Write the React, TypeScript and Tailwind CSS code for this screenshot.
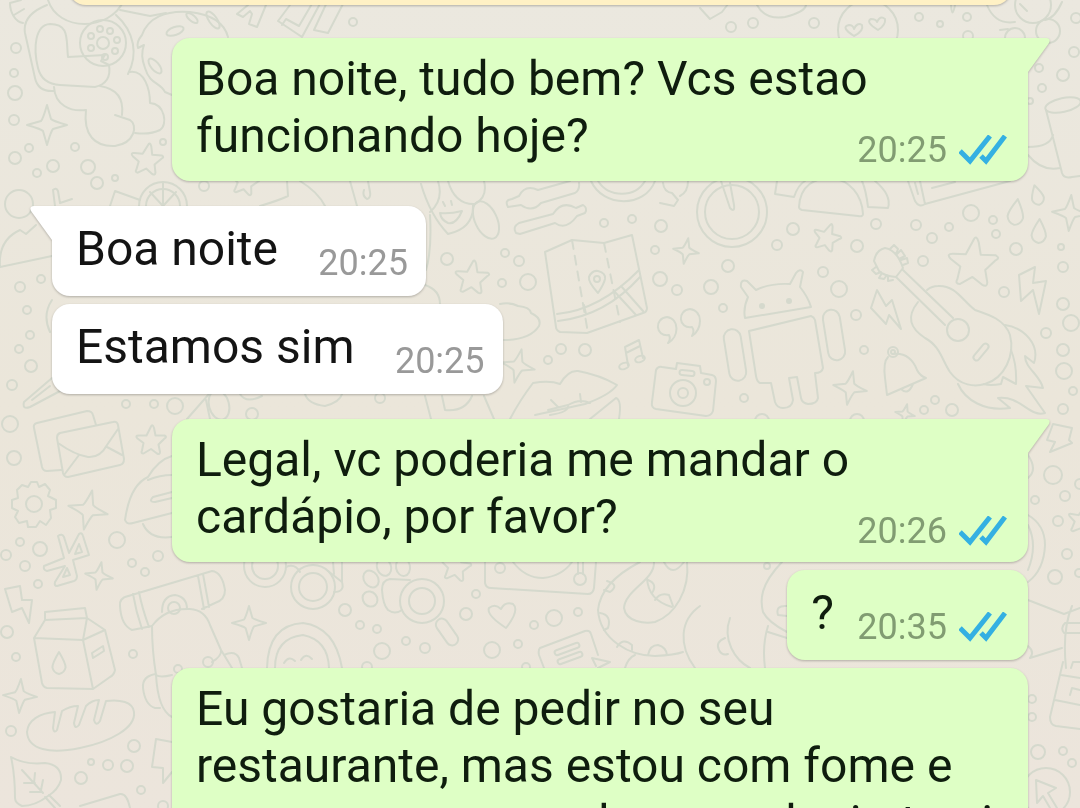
type Side = 'in' | 'out';

interface Message {
  text: string;
  time: string;
  side: Side;
  first?: boolean;
  multiline?: boolean;
}

const MESSAGES: Message[] = [
  { text: 'Boa noite, tudo bem? Vcs estao funcionando hoje?', time: '20:25', side: 'out', first: true, multiline: true },
  { text: 'Boa noite', time: '20:25', side: 'in', first: true },
  { text: 'Estamos sim', time: '20:25', side: 'in' },
  { text: 'Legal, vc poderia me mandar o cardápio, por favor?', time: '20:26', side: 'out', first: true, multiline: true },
  { text: '?', time: '20:35', side: 'out' },
  {
    text: 'Eu gostaria de pedir no seu restaurante, mas estou com fome e como quero agora ler o cardapio to ai esperando',
    time: '20:36',
    side: 'out',
    multiline: true,
  },
];

// [cx, cy, r]
const CIRCLES = [
  [16, 48, 5], [14, 73, 4], [15, 93, 7], [14, 120, 5], [29, 148, 4], [15, 158, 6], [53, 166, 6], [37, 173, 4],
  [75, 147, 4], [88, 167, 7], [97, 183, 6], [115, 178, 3], [163, 142, 3], [19, 204, 14], [204, 186, 5],
  [103, 43, 23], [103, 43, 6], [91, 36, 3], [100, 29, 3], [110, 31, 3], [117, 40, 3], [115, 51, 3], [105, 57, 3], [91, 48, 3],
  [353, 22, 4], [731, 27, 5], [753, 23, 5], [814, 23, 5], [919, 17, 4], [940, 24, 3], [967, 17, 4], [968, 36, 5],
  [1076, 18, 5], [1074, 52, 5], [1063, 75, 6], [1039, 68, 4], [1042, 88, 4], [1030, 101, 3], [868, 30, 30],
  [1033, 5, 18], [1015, 38, 10], [1048, 31, 12], [163, 206, 24], [163, 206, 17],
  [732, 212, 35], [732, 212, 27], [971, 213, 8], [993, 220, 4], [996, 234, 4], [1016, 249, 6], [1061, 247, 3],
  [1063, 267, 5], [876, 224, 5], [916, 225, 5], [949, 227, 4], [932, 238, 5], [923, 261, 5], [857, 246, 6],
  [793, 229, 6], [777, 245, 5], [823, 272, 5], [839, 289, 8], [1004, 292, 5], [1063, 304, 6], [1071, 323, 8],
  [1046, 333, 5], [1063, 350, 6], [1064, 371, 8], [1073, 391, 4], [856, 315, 5], [864, 350, 4], [744, 398, 4],
  [935, 400, 4], [924, 410, 4], [952, 410, 6], [762, 421, 7], [857, 421, 7], [893, 352, 5], [893, 352, 2], [958, 330, 11],
  [447, 259, 6], [505, 253, 4], [519, 261, 5], [502, 283, 4], [528, 282, 8], [604, 223, 4], [632, 219, 4],
  [661, 226, 6], [655, 250, 4], [660, 279, 7], [677, 290, 5], [728, 266, 6], [711, 287, 7], [723, 308, 4],
  [561, 349, 5], [585, 350, 6], [548, 360, 4], [597, 279, 3], [683, 393, 13], [683, 393, 5], [707, 382, 3],
  [20, 287, 5], [41, 279, 4], [27, 310, 4], [30, 335, 4], [19, 349, 4], [31, 366, 6], [12, 385, 5],
  [126, 404, 4], [154, 404, 4], [175, 406, 8], [252, 414, 6], [380, 398, 5], [10, 424, 8], [14, 458, 7],
  [117, 540, 8], [40, 549, 7], [20, 542, 4], [6, 555, 5], [25, 566, 5], [38, 584, 4], [158, 556, 5], [132, 563, 4],
  [145, 572, 4], [34, 504, 8], [174, 608, 6], [208, 662, 5], [178, 669, 4], [7, 632, 6], [16, 657, 4], [133, 654, 4],
  [11, 731, 5], [134, 746, 6], [91, 762, 3], [108, 765, 5], [127, 766, 6], [81, 778, 6], [141, 790, 4], [163, 806, 5],
  [265, 566, 21], [265, 566, 13], [313, 587, 22], [313, 587, 14], [345, 610, 6], [360, 625, 4], [377, 629, 4],
  [382, 651, 8], [406, 641, 4], [425, 648, 5], [367, 667, 5], [476, 594, 4], [466, 614, 6], [422, 601, 22],
  [422, 601, 13], [500, 568, 5], [580, 579, 6], [554, 618, 8], [534, 625, 4], [578, 612, 4], [518, 644, 4],
  [492, 650, 8], [526, 667, 4], [767, 566, 3], [1053, 475, 9], [1065, 496, 5], [1035, 500, 4], [1058, 521, 5],
  [1067, 554, 5], [1055, 577, 7], [1079, 573, 4], [1080, 484, 5], [1063, 409, 5], [1032, 699, 4], [1032, 717, 4],
  [1038, 752, 7], [1063, 751, 4], [1072, 763, 4], [1046, 792, 24],
];

// [cx, cy, size, rotation]
const STARS = [
  [147, 159, 16, 5], [827, 237, 14, 15], [973, 262, 25, 2], [472, 277, 17, 3], [151, 440, 15, 0], [456, 566, 15, 8], [1082, 520, 14, 10],
  [245, 181, 14, 10],
];

const SPARKLES = [
  [47, 125, 20, 0], [1070, 213, 18, 4], [850, 388, 17, 10], [686, 251, 13, 10], [518, 366, 17, 12],
  [88, 510, 20, 12], [99, 576, 14, 10], [249, 623, 17, 0], [20, 696, 17, 3], [905, 414, 10, 12],
];

const DROPS = [
  [1016, 212, 13, 8], [1037, 195, 10, -15], [1039, 231, 12, 3], [59, 663, 11, 0],
];

// [cx, cy, rx, ry, rotation]
const ELLIPSES = [
  [175, 31, 9, 4, -20], [192, 18, 7, 3, 40], [155, 66, 9, 4, 50], [213, 20, 10, 4, 55], [1063, 105, 18, 7, -12],
  [486, 220, 11, 20, -25], [219, 405, 10, 15, -15], [371, 579, 7, 9, -35], [370, 599, 7, 8, -40],
  [384, 567, 7, 9, -20], [403, 567, 7, 9, -10], [624, 366, 5, 3, -20], [640, 359, 5, 3, -20],
];

// [cx, cy, width, height, rotation]
const PILLS = [
  [834, 335, 17, 51, -9], [735, 355, 17, 52, -9], [981, 352, 6, 20, 40], [447, 632, 12, 30, -35],
  [687, 373, 15, 5, 6], [567, 649, 26, 5, -20], [570, 658, 26, 5, -20],
];

const PATHS = [
  // astronaut bear
  'M48 0C58 32 110 32 124 0M47 5Q22 15 25 33L35 78Q38 92 54 91M10 3C10 12 15 22 23 23M10 3L21 0M14 15L24 9',
  'M68 57C66 40 70 24 50 24C35 25 33 48 38 68Q42 84 60 85L95 87Q112 83 109 65L101 61L105 55L68 57',
  'M116 15C135 32 138 55 128 74M54 87C55 105 70 112 86 110M86 110C83 135 95 147 115 146C135 143 138 125 130 120L115 115M100 86Q125 90 122 115',
  'M130 72C145 70 150 90 150 103C165 104 168 125 160 130Q150 135 135 133M120 10L150 16L166 13',
  'M142 35C148 18 165 10 190 12C215 15 225 25 228 37M142 35Q136 42 138 48L144 45Q140 55 145 68C150 85 160 82 165 92L172 95',
  // top row
  'M248 5L237 14L243 17L250 11L252 14L249 24L257 27L268 0M290 5L278 21L302 37L322 0M282 25L286 19L299 26L313 2M328 0L314 30L328 33L345 0',
  'M700 8L710 19L722 12L728 4M757 5Q765 20 785 17Q805 12 806 5M951 5Q952 20 955 5M987 5Q995 25 1015 22M1000 30L1008 29M1062 2Q1055 18 1045 20M1020 4L1027 11',
  'M854 36Q840 27 849 25Q853 25 854 29Q857 22 862 25Q864 31 854 36ZM878 30Q865 22 871 19Q876 19 877 22Q880 15 885 19Q886 25 878 30Z',
  'M1046 110L1062 173Q1064 179 1072 177L1080 176M1028 147Q1050 147 1053 135M1028 155Q1042 172 1060 168',
  // between the first bubbles
  'M53 190Q56 187 58 191L60 203L72 199M53 190L55 206M110 206L115 191L140 200M163 182V206M150 192L163 206L176 192M287 181L288 196Q280 200 260 206M300 181Q318 192 325 206M350 181L357 206M364 190Q362 196 367 199Q371 198 370 192L368 181',
  'M421 184Q430 215 448 234Q474 228 473 205M440 213Q450 214 462 211Q456 225 448 223Q441 220 440 213M443 202L445 206M451 201L452 205M448 181Q455 205 475 204Q488 197 484 181M438 181Q444 200 430 212M430 215Q432 250 426 270M425 285Q440 290 440 304',
  'M508 207Q504 200 512 199L519 196Q525 184 538 190L570 181M508 207L521 205Q532 213 541 203L575 193Q580 190 579 183',
  'M516 233Q512 227 519 223L553 214Q562 200 576 208L583 205Q588 208 585 213L577 216Q566 231 555 223L520 234Z',
  'M591 181C603 208 645 208 655 181M598 181C609 198 635 198 645 181M663 183Q664 192 672 193L678 200L674 206L660 203M680 196Q688 192 688 181',
  'M721 181L730 208Q735 213 734 205L730 183',
  'M799 207C800 185 815 178 831 178C850 180 862 195 863 214Q863 217 858 216L802 210Q799 209 799 207M777 181L775 194L794 197Q798 185 805 181M862 181Q866 190 868 207L888 208Q892 195 875 181',
  'M908 181L915 201Q919 208 925 204L1010 181M925 204L920 181M932 188L955 182M915 183L918 194',
  // map
  'M545 252L572 240L604 243L632 235L647 308Q647 312 643 313L587 333L560 332Q556 330 556 327ZM557 314Q600 310 639 270M558 321Q605 316 640 277M614 291L636 315M621 286L643 311M584 305L586 314',
  'M598 293Q588 282 589 277Q592 270 598 271Q606 273 605 279Q604 284 598 293Z',
  'M669 335C655 337 654 318 667 317C680 319 679 337 668 343Q671 339 669 335ZM692 327C678 329 677 310 690 309C704 311 702 330 692 336Q695 331 692 327ZM628 365L625 347L639 340L643 358M626 353L640 346',
  'M656 370Q658 366 662 367L676 369L677 363L700 366L701 373L712 375Q716 376 716 381L713 411Q711 416 706 416L656 409Q651 408 652 402Z',
  'M510 419Q520 400 533 383Q550 380 560 384Q568 370 578 371Q600 375 617 385Q610 395 585 404L535 415M548 410L568 405Q570 412 550 415M551 400L558 407M580 394L581 402M568 405Q580 398 590 403M590 419L616 398Q622 400 619 419',
  'M500 304Q510 302 518 306Q530 307 531 313Q542 318 539 326Q530 340 504 340M425 396L431 419M484 396L494 419M442 396L445 410Q465 412 472 396',
  // robot
  'M745 318Q743 308 748 297L741 287Q740 279 747 281L756 290Q770 283 790 284L796 273Q800 268 803 272L800 287Q808 297 811 307Z',
  'M749 331L811 316Q814 317 815 320L823 368Q822 373 815 373L818 398Q817 404 808 404Q802 403 801 398L797 377L789 378L793 400Q792 408 783 408Q777 408 775 402L771 383L760 383Q757 382 756 376Z',
  'M1019 275L1035 267L1033 283L1046 281L1039 314L1033 290L1021 301ZM877 290L871 308L886 324L889 315L901 329L892 300L886 306Z',
  'M888 357Q883 362 885 378L887 395L926 378Q920 376 917 370Q910 352 893 354M901 389Q908 396 913 384',
  // guitar
  'M874 261Q876 250 885 248Q897 250 903 268L896 277Q884 276 879 271ZM903 270L953 318M896 277L945 325M890 249L894 245L898 249L896 254M897 254L901 250L905 256L899 259M901 260L907 258L908 263L903 265M876 267L872 270L876 274L881 272M882 273L879 278L884 279L887 275M888 276L888 281L893 280',
  'M918 302C906 317 910 328 925 338C940 346 942 360 950 372C960 386 975 387 985 384C1005 378 1015 355 1010 335C1005 320 990 315 975 310C962 300 955 285 938 286Q932 286 927 290',
  'M1005 325C1025 328 1040 345 1034 363L1025 356C1025 368 1040 375 1043 388L1026 386L1045 413C1030 418 1020 395 998 398L1010 408C985 412 965 400 958 384M1011 350Q1017 365 1016 384L1003 377L1001 384Q990 386 984 384',
  // left column
  'M0 267Q-2 240 20 230L26 234L36 225M0 267L52 256M52 300Q42 315 50 332M24 402Q22 410 30 407L62 390M24 402L52 378M32 400L50 386',
  'M305 394Q308 404 325 406Q340 402 342 394M187 419L209 394M206 400L210 419M240 394Q246 404 262 396',
  'M61 470L47 471Q43 471 42 467L34 428Q33 424 37 423L87 411Q92 411 93 415L96 425M60 433L113 422Q117 421 118 425L124 459Q124 464 120 465L68 477Q64 477 63 473L57 438Q57 434 60 433M58 443Q75 455 88 457Q100 458 107 445L118 429M64 475L79 455M122 455L107 447',
  'M31 482H37L39 487L45 484L50 490L48 496L56 500V508L50 510L51 518L46 525L40 521L36 527H28L27 521L19 523L15 517L18 511L12 508V500L18 498L17 490L22 485L28 487Z',
  'M58 536Q62 533 64 537L69 553L79 534Q82 532 83 536L89 555L73 560L77 576Q77 580 74 581L57 586Q54 586 55 582L65 566L47 571Q43 570 44 566L64 558ZM75 554L79 544L82 552ZM63 577L67 568L70 575Z',
  'M172 456Q158 460 148 477Q130 485 125 520Q127 525 133 523L172 513M148 480Q160 475 172 475M172 492L153 497Q148 502 155 502L172 498M143 524Q150 540 172 537M5 589L20 586L22 600L32 600L29 623L22 608L12 612Z',
  'M128 596Q119 598 120 606Q121 625 132 630L152 626M125 597L212 571Q222 572 225 590Q225 600 215 603L202 609M133 594Q136 612 142 629M139 592Q142 608 149 627M198 576L204 609M203 574L209 607M162 612Q162 596 175 595Q187 597 187 609',
  'M152 626Q165 608 190 609Q205 610 210 625L221 650Q222 656 212 662M152 626Q152 650 156 675Q160 678 172 675M156 674Q142 676 143 688Q145 705 155 708H160M156 675Q158 710 172 717M224 655Q235 650 239 658L242 668M221 650L232 668',
  'M34 638L45 620V612L85 608L87 618L105 630L115 670Q114 675 110 677L93 689L47 688Q43 687 42 683ZM34 638L83 640L93 689M83 640L105 630M83 640L87 618L45 620M92 653L103 646L104 651L93 658Z',
  'M27 732C28 720 40 713 55 712L53 728Q54 734 57 730L62 711Q70 706 78 706L74 723Q75 730 79 725L86 706Q92 700 99 700L94 720Q96 727 100 721L106 701C120 699 133 702 134 712C136 728 110 742 80 748C50 754 28 750 27 732Z',
  'M11 757Q25 765 45 763Q62 765 61 780Q58 790 48 796Q35 806 22 806Q15 803 15 798Q15 775 11 757M22 770L43 793M35 773L34 783M24 783H35M43 780L41 790M30 792H41M45 797L55 808M49 795L60 806M172 742L156 739L152 767L163 768V783L172 772M80 806L120 794Q127 793 130 808',
  // middle strip
  'M286 567Q295 563 300 572M328 571L342 582V562M334 592Q345 592 342 582M333 562L334 574M410 580L390 579Q382 580 382 590Q383 605 388 610Q395 615 402 610',
  'M267 668Q268 625 303 623Q335 627 342 668M275 668Q275 638 303 635Q328 640 329 668M284 663Q289 655 295 661M301 660Q306 652 312 659',
  'M485 562V583Q486 588 491 588L588 594Q593 594 594 588L596 562M513 562Q525 578 543 578Q562 576 572 562M578 574V562M583 574V562',
  'M506 628Q486 615 489 608Q495 603 501 609Q505 601 513 604Q520 610 506 628ZM540 648L585 631Q590 630 591 634L598 655M540 648Q538 650 539 655L544 668M598 668L610 662L592 658L596 666',
  'M640 562C615 575 600 590 598 610C600 640 630 656 655 656Q675 655 683 652M654 562C655 580 625 590 624 608C626 622 645 624 655 622C675 615 690 590 687 562M647 578Q648 600 672 607M700 606C680 620 678 645 695 668M730 618C722 640 735 660 750 668',
  'M664 562Q672 578 684 562M607 581Q620 585 610 592L604 590M600 613Q612 615 608 628L604 630M617 647Q623 637 632 645L632 650M648 655Q650 645 658 645Q666 647 667 655M655 600Q660 592 669 595L673 606M648 580Q658 584 652 593M725 638Q715 642 719 650Q722 656 728 654M625 668Q628 658 635 655',
  'M782 562C760 585 760 600 763 612Q768 622 787 632M768 626Q762 645 765 668M768 632L787 638M787 606Q775 605 778 615L787 616',
  // right column
  'M1053 424L1072 428L1069 440L1072 443L1050 452L1055 442L1047 440ZM1028 455Q1038 470 1028 478M1028 515Q1045 525 1045 545Q1044 570 1028 582M1028 525Q1038 545 1028 570M1028 600L1064 614L1080 608M1028 646Q1035 652 1030 658L1062 648M1072 606Q1062 630 1066 668M1080 623H1065Q1060 628 1064 633H1080',
  'M1063 662L1050 717Q1050 725 1056 726L1080 729M1061 675L1080 678M1055 700L1080 705M1071 668L1073 662H1080M1070 695L1072 688L1080 690M1036 780L1037 803L1043 796L1050 808M1036 780L1056 788L1048 793L1057 808',
];

const STAR = 'M0 -9Q1 -11 2 -8L3 -3Q4 -3 9 -3Q11 -2 9 -1L5 3L6 8Q6 10 4 9L0 6L-5 9Q-7 9 -6 7L-5 2L-9 -1Q-11 -3 -8 -3L-3 -3Z';
const SPARKLE = 'M0 -10L2 -3Q3 -2 10 0L3 2Q2 3 0 10L-2 3Q-3 2 -10 0L-3 -2Q-2 -3 0 -10Z';
const DROP = 'M0 -10Q6 0 6 4Q5 9 0 10Q-5 9 -6 4Q-6 0 0 -10Z';

function Shape({ d, at }: { d: string; at: number[] }) {
  const [x, y, size, rotation] = at;
  return (
    <path
      d={d}
      vectorEffect="non-scaling-stroke"
      transform={`translate(${x} ${y}) rotate(${rotation}) scale(${size / 10})`}
    />
  );
}

function Wallpaper() {
  return (
    <svg
      className="absolute inset-0 h-full w-full"
      viewBox="0 0 1080 808"
      preserveAspectRatio="xMidYMin slice"
      fill="none"
      stroke="#d5d9cd"
      strokeWidth="2"
      strokeLinejoin="round"
      strokeLinecap="round"
      aria-hidden="true"
    >
      {CIRCLES.map(([cx, cy, r], i) => <circle key={i} cx={cx} cy={cy} r={r} />)}
      {ELLIPSES.map(([cx, cy, rx, ry, a], i) => (
        <ellipse key={i} cx={cx} cy={cy} rx={rx} ry={ry} transform={`rotate(${a} ${cx} ${cy})`} />
      ))}
      {PILLS.map(([cx, cy, w, h, a], i) => (
        <rect key={i} x={cx - w / 2} y={cy - h / 2} width={w} height={h} rx={Math.min(w, h) / 2} transform={`rotate(${a} ${cx} ${cy})`} />
      ))}
      {STARS.map((s, i) => <Shape key={i} d={STAR} at={s} />)}
      {SPARKLES.map((s, i) => <Shape key={i} d={SPARKLE} at={s} />)}
      {DROPS.map((s, i) => <Shape key={i} d={DROP} at={s} />)}
      {PATHS.map((d, i) => <path key={i} d={d} />)}
      <path d="M572 240L588 333M604 243L620 322" strokeDasharray="9 7" />
      <g fill="#d5d9cd">
        <circle cx="762" cy="306" r="2" />
        <circle cx="789" cy="301" r="2" />
      </g>
    </svg>
  );
}

function ReadTicks() {
  return (
    <svg className="h-[30px] w-12" viewBox="0 0 48 30" fill="none" stroke="#34b0e2" strokeWidth="5" role="img" aria-label="Lida">
      <path d="M1 16L11 26L31 1M22 21L27 26L46 1" />
    </svg>
  );
}

function Tail({ side }: { side: Side }) {
  return side === 'out' ? (
    <svg className="absolute top-0 -right-[22px] h-[34px] w-[23px]" viewBox="0 0 23 34" fill="#deffc5" aria-hidden="true">
      <path d="M0 0H19Q24 0 22 5L1 34H0Z" />
    </svg>
  ) : (
    <svg className="absolute top-0 -left-[22px] h-[34px] w-[23px]" viewBox="0 0 23 34" fill="#fff" aria-hidden="true">
      <path d="M23 0H4Q-1 0 1 5L22 34H23Z" />
    </svg>
  );
}

function Bubble({ message }: { message: Message }) {
  const { text, time, side, first, multiline } = message;
  const out = side === 'out';
  const color = out ? 'bg-[#deffc5] text-[#0f1d0e]' : 'bg-white text-[#141414]';
  const corner = !first ? '' : out ? 'rounded-tr-none' : 'rounded-tl-none';
  const space = multiline ? 'pt-3 pr-6 pb-[17px]' : out ? 'pt-[14px] pr-[194px] pb-[19px]' : 'pt-[14px] pr-[148px] pb-[19px]';

  return (
    <li
      className={`relative w-fit rounded-[18px] pl-6 drop-shadow-[0_1px_1px_rgba(0,0,0,0.25)] ${color} ${corner} ${space} ${
        out ? 'ml-auto max-w-[856px]' : ''
      } ${first ? 'mt-[25px]' : 'mt-2'}`}
    >
      {first && <Tail side={side} />}
      <p className="text-[48px] leading-[57px]">{text}</p>
      <div
        className={`absolute flex items-center gap-3 text-[36px] leading-10 ${multiline ? 'bottom-[11px]' : 'bottom-[13px]'} ${
          out ? 'right-[21px] text-[#819c72]' : 'right-[18px] text-[#999999]'
        }`}
      >
        <time>{time}</time>
        {out && <ReadTicks />}
      </div>
    </li>
  );
}

export default function App() {
  return (
    <main className="relative h-screen overflow-hidden bg-linear-to-b from-[#ebe8df] via-[#ebe6da] to-[#ece5dc] font-[Roboto,sans-serif]">
      <Wallpaper />
      <div className="relative px-[52px]">
        <div className="mx-4 -mt-[35px] h-10 rounded-[18px] bg-[#fff1c5] drop-shadow-[0_1px_1px_rgba(0,0,0,0.25)]" />
        <ul className="pt-2">
          {MESSAGES.map((message, i) => <Bubble key={i} message={message} />)}
        </ul>
      </div>
    </main>
  );
}
